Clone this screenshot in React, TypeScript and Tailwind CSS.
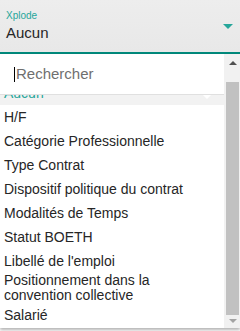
const options = [
  "H/F",
  "Catégorie Professionnelle",
  "Type Contrat",
  "Dispositif politique du contrat",
  "Modalités de Temps",
  "Statut BOETH",
  "Libellé de l'emploi",
  "Positionnement dans la convention collective",
  "Salarié",
];

const ScrollBar = () => (
  <div className="flex w-4 flex-col bg-[#f1f1f1]">
    <div className="flex h-[16px] items-center justify-center pl-[1px] pt-[1px]">
      <div className="h-0 w-0 border-x-[4px] border-b-[4px] border-x-transparent border-b-[#505050]" />
    </div>
    <div className="mt-[12px] ml-[2px] mr-[1px] h-[233px] bg-[#c1c1c1]" />
    <div className="flex flex-1 items-start justify-center pl-[1px] pt-[4px]">
      <div className="h-0 w-0 border-x-[4px] border-t-[4px] border-x-transparent border-t-[#a3a3a3]" />
    </div>
  </div>
);

const App = () => {
  return (
    <div className="h-[331px] w-[240px] overflow-hidden bg-white font-['Liberation_Sans',Arial,sans-serif]">
      <div className="flex h-[54px] items-start justify-between border-b-2 border-[#00897b] bg-gradient-to-b from-[#ededed] to-[#e8e8e8] pl-[6px] pr-[7px]">
        <div className="flex flex-col pt-[10px]">
          <span className="text-[10px] leading-[11px] text-[#26a69a]">Xplode</span>
          <span className="mt-[3px] text-[15px] leading-[18px] text-[#262626]">Aucun</span>
        </div>
        <div className="mt-[24px] h-0 w-0 border-x-[5px] border-t-[5px] border-x-transparent border-t-[#26a69a]" />
      </div>

      <div className="flex h-[274px] bg-white shadow-[0_2px_3px_rgba(0,0,0,0.3)]">
        <div className="flex min-w-0 flex-1 flex-col">
          <div className="flex h-[41px] items-center border-b border-[#e0e0e0] pl-[14px]">
            <div className="h-[15px] w-px bg-black" />
            <input
              className="w-full bg-transparent pl-[1px] text-[15px] text-[#262626] outline-none placeholder:text-[#6f6f6f]"
              placeholder="Rechercher"
            />
          </div>
          <div className="flex-1 overflow-hidden">
            <div className="-mt-[14px]">
              <div className="flex min-h-[24px] items-center justify-between bg-[#f2f2f2] pl-1 pr-[13px] text-[14px] leading-[15px] text-[#26a69a]">
                <span>Aucun</span>
                <div className="mt-[8px] h-0 w-0 border-x-[4px] border-t-[4px] border-x-transparent border-t-white" />
              </div>
              {options.map((label) => (
                <div
                  key={label}
                  className="flex min-h-[24px] items-center pl-1 pr-6 text-[14px] leading-[15px] text-[#262626]"
                >
                  {label}
                </div>
              ))}
            </div>
          </div>
        </div>
        <ScrollBar />
      </div>
    </div>
  );
};

export default App;
